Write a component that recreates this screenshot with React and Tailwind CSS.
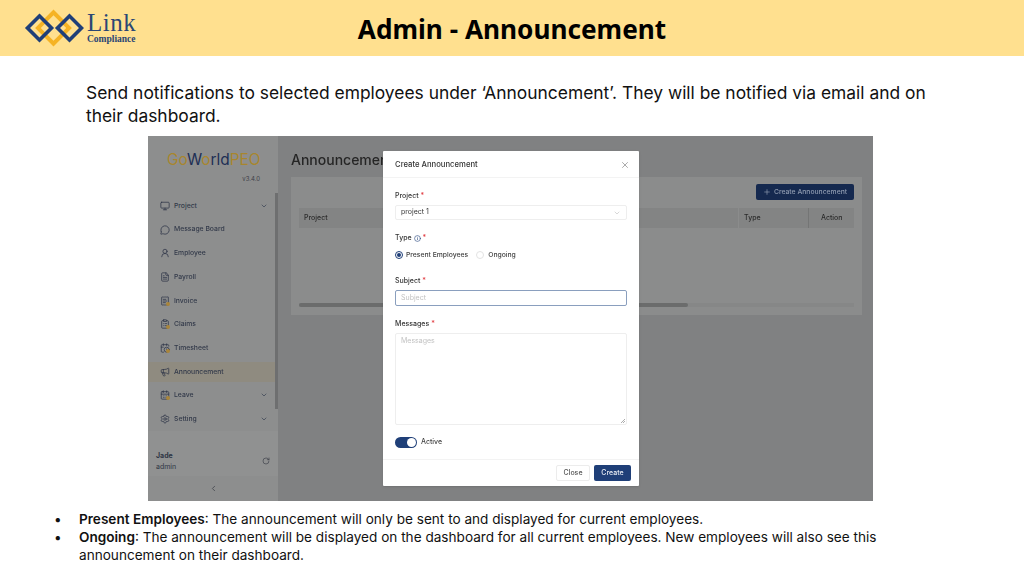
import React from 'react'
import { ChevronDown, ChevronLeft, Monitor, MessageCircle, UserRound, FileText, ReceiptText, ClipboardList, CalendarClock, Megaphone, CalendarDays, Settings, Info, X, Plus, RotateCw } from 'lucide-react'

const menu = [
  { name: 'Project', icon: Monitor, arrow: true },
  { name: 'Message Board', icon: MessageCircle },
  { name: 'Employee', icon: UserRound },
  { name: 'Payroll', icon: FileText },
  { name: 'Invoice', icon: ReceiptText, dot: true },
  { name: 'Claims', icon: ClipboardList, dot: true },
  { name: 'Timesheet', icon: CalendarClock, dot: true },
  { name: 'Announcement', icon: Megaphone, active: true },
  { name: 'Leave', icon: CalendarDays, arrow: true, dot: true },
  { name: 'Setting', icon: Settings, arrow: true },
]

function Logo() {
  return (
    <div className="flex items-center gap-[3px] ml-[24px] w-[300px]">
      <svg width="60" height="38" viewBox="0 0 60 38" fill="none">
        <rect x="18.5" y="8" width="22" height="22" transform="rotate(45 29.5 19)" stroke="#f5b324" strokeWidth="4" />
        <rect x="7" y="10.5" width="17" height="17" transform="rotate(45 15.5 19)" stroke="#1f3f78" strokeWidth="3.6" />
        <rect x="37" y="10.5" width="17" height="17" transform="rotate(45 45.5 19)" stroke="#1f3f78" strokeWidth="3.6" />
      </svg>
      <div className="flex flex-col items-start text-[#2b4674] font-['Liberation_Serif',serif]">
        <span className="text-[25px] leading-[22px] tracking-[0.5px]">Link</span>
        <span className="text-[9.5px] leading-[11px] font-bold">Compliance</span>
      </div>
    </div>
  )
}

function Sidebar() {
  return (
    <div className="w-[130px] shrink-0 flex flex-col bg-[#8d8e8e]">
      <div className="h-[47px] pl-[19px] pr-[18px] pt-[14px]">
        <div className="text-[15.4px] leading-[20px] text-[#a8862e] whitespace-nowrap">
          Go<span className="text-[#1e2f55]">W</span>o<span className="text-[#1e2f55]">rld</span>PEO
        </div>
        <div className="text-[6px] text-[#3d4048] text-right mt-[5px] leading-[8px]">v3.4.0</div>
      </div>
      <div className="flex-1 relative pt-[11px]">
        {menu.map((m) => {
          const Icon = m.icon
          return (
            <div key={m.name} className="h-[23.7px] flex items-center">
              <div className={`w-full h-[20px] flex items-center pl-[12px] pr-[8px] gap-[4px] text-[6.8px] font-medium text-[#333a4a] ${m.active ? 'bg-[#8f8b80] border-r border-[#a9853a]' : ''}`}>
                <span className="relative">
                  <Icon size={10} strokeWidth={1.8} className="text-[#2d3547]" />
                  {m.dot && <span className="absolute right-0 bottom-0 w-[4px] h-[4px] rounded-full bg-[#a9853a]" />}
                </span>
                <span className="flex-1">{m.name}</span>
                {m.arrow && <ChevronDown size={8} strokeWidth={2} className="text-[#333c4f] mr-[2px]" />}
              </div>
            </div>
          )
        })}
        <div className="absolute right-0 top-[10px] w-[3px] h-[216px] bg-[#6e6f70]" />
      </div>
      <div className="h-[45px] bg-[#909191] flex items-center justify-between pl-[8px] pr-[8px] pt-[14px]">
        <div className="text-[7px] leading-[11px] text-[#2f3645]">
          <div className="font-bold">Jade</div>
          <div>admin</div>
        </div>
        <RotateCw size={8} className="text-[#3d4048]" />
      </div>
      <div className="h-[25px] flex items-center justify-center">
        <ChevronLeft size={9} className="text-[#3d4048]" />
      </div>
    </div>
  )
}

function Label({ text, info }) {
  return (
    <div className="text-[7px] leading-[10px] font-medium text-[#333] flex items-center gap-[2px]">
      {text}
      {info && <Info size={7} className="text-[#1f3f78]" />}
      <span className="text-[#e0383e]">*</span>
    </div>
  )
}

function Modal() {
  return (
    <div className="absolute left-[235px] top-[15px] w-[256px] h-[335px] bg-white flex flex-col shadow-sm rounded-[1px]">
      <div className="h-[27px] shrink-0 border-b border-[#f3f3f3] flex items-center justify-between pl-[12px] pr-[9px] pt-[2px]">
        <span className="text-[7.7px] font-medium text-[#333]">Create Announcement</span>
        <X size={10} className="text-[#9a9a9a]" />
      </div>
      <div className="flex-1 px-[12px] pt-[13px] flex flex-col">
        <Label text="Project" />
        <div className="mt-[4px] h-[15px] border border-[#eeeeee] rounded-[2px] flex items-center justify-between px-[5px] text-[7px] text-[#333]">
          project 1
          <ChevronDown size={8} className="text-[#c4c4c4]" />
        </div>
        <div className="mt-[13px]"><Label text="Type" info /></div>
        <div className="mt-[7px] flex items-center text-[6.8px] font-medium text-[#444]">
          <span className="w-[8px] h-[8px] rounded-full border border-[#1f3f78] flex items-center justify-center mr-[3px]">
            <span className="w-[4px] h-[4px] rounded-full bg-[#1f3f78]" />
          </span>
          Present Employees
          <span className="w-[8px] h-[8px] rounded-full border border-[#e3e3e3] ml-[8px] mr-[4px]" />
          Ongoing
        </div>
        <div className="mt-[16px]"><Label text="Subject" /></div>
        <div className="mt-[4px] h-[16px] border-[1.5px] border-[#8a9fbe] rounded-[2px] flex items-center px-[5px] text-[7px] text-[#c2c2c2]">Subject</div>
        <div className="mt-[13px]"><Label text="Messages" /></div>
        <div className="mt-[4px] h-[92px] border border-[#eeeeee] rounded-[2px] px-[5px] pt-[2px] text-[7px] text-[#c2c2c2] relative">
          Messages
          <svg className="absolute right-[1px] bottom-[1px]" width="5" height="5" viewBox="0 0 5 5"><path d="M1 5L5 1M3 5L5 3" stroke="#8a8a8a" strokeWidth="0.7" /></svg>
        </div>
        <div className="mt-[12px] flex items-center gap-[4px] text-[7px] font-medium text-[#444]">
          <span className="w-[22px] h-[11px] rounded-full bg-[#1f3f78] flex items-center justify-end pr-[1px]">
            <span className="w-[9px] h-[9px] rounded-full bg-white" />
          </span>
          Active
        </div>
      </div>
      <div className="h-[27px] shrink-0 border-t border-[#f3f3f3] flex items-center justify-end gap-[4px] pr-[8px]">
        <span className="w-[34px] h-[16px] border border-[#ececec] rounded-[2px] flex items-center justify-center text-[7px] font-medium text-[#555]">Close</span>
        <span className="w-[37px] h-[16px] bg-[#1f3f78] rounded-[2px] flex items-center justify-center text-[7px] font-medium text-[#e8ecf3]">Create</span>
      </div>
    </div>
  )
}

function Screenshot() {
  return (
    <div className="relative w-[725px] h-[365px] ml-[148px] mt-[9px] flex bg-[#808182] overflow-hidden font-['Inter',sans-serif]">
      <div className="flex w-full h-full blur-[0.3px]">
        <Sidebar />
        <div className="flex-1 pl-[13px] pr-[11px] pt-[15px]">
          <div className="text-[14px] leading-[18px] font-medium text-[#252525] whitespace-nowrap">Announcement</div>
          <div className="mt-[8px] h-[138px] bg-[#8b8c8c] px-[8px] pt-[7px]">
            <div className="flex justify-end">
              <div className="w-[98px] h-[16px] bg-[#15294f] rounded-[2px] flex items-center justify-center gap-[3px] text-[6.8px] font-medium text-[#8f9bb0]">
                <Plus size={8} />
                Create Announcement
              </div>
            </div>
            <div className="mt-[8px] h-[20px] bg-[#838484] flex items-center text-[7px] font-medium text-[#2b2b2b]">
              <span className="pl-[5px] flex-1">Project</span>
              <span className="w-[70px] h-full flex items-center pl-[5px] border-l border-[#8b8c8c]">Type</span>
              <span className="w-[46px] h-full flex items-center pl-[12px] border-l border-[#747575]">Action</span>
            </div>
            <div className="mt-[75px] h-[4px] bg-[#868787]">
              <div className="w-[389px] h-[4px] bg-[#6b6c6c] rounded-full" />
            </div>
          </div>
        </div>
      </div>
      <Modal />
    </div>
  )
}

export default function App() {
  return (
    <div className="w-[1024px] h-[576px] bg-white overflow-hidden font-['Inter',sans-serif] text-[#111]">
      <div className="h-[56px] bg-[#ffe08f] relative flex items-center">
        <Logo />
        <h1 className="absolute inset-x-0 top-[11px] text-center text-[26.2px] font-bold leading-[36px] text-black font-['Noto_Sans',sans-serif]">Admin - Announcement</h1>
      </div>
      <p className="ml-[86px] mt-[25px] w-[860px] text-[17.4px] leading-[23px]">
        Send notifications to selected employees under ‘Announcement’. They will be notified via email and on their dashboard.
      </p>
      <Screenshot />
      <div className="mt-[9px] ml-[54px] w-[825px] text-[13.6px] leading-[18px]">
        <div className="flex">
          <span className="w-[25px] shrink-0">•</span>
          <p><b className="font-semibold">Present Employees</b>: The announcement will only be sent to and displayed for current employees.</p>
        </div>
        <div className="flex">
          <span className="w-[25px] shrink-0">•</span>
          <p><b className="font-semibold">Ongoing</b>: The announcement will be displayed on the dashboard for all current employees. New employees will also see this announcement on their dashboard.</p>
        </div>
      </div>
    </div>
  )
}
